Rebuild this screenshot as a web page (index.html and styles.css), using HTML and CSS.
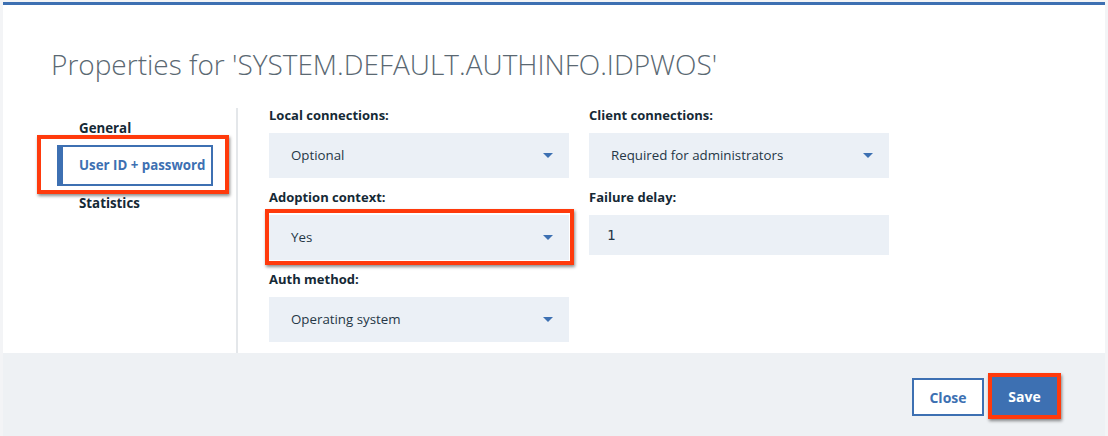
FILE: index.html
```html
<!DOCTYPE html>
<html>
<head>
<meta charset="utf-8">
<link rel="stylesheet" href="styles.css">
</head>
<body>
<div class="modal">
  <div class="header">
    <h1 class="title">Properties for 'SYSTEM.DEFAULT.AUTHINFO.IDPWOS'</h1>
  </div>
  <div class="main">
    <nav class="nav">
      <div class="nav-item">General</div>
      <div class="nav-item selected annotated">User ID + password</div>
      <div class="nav-item">Statistics</div>
    </nav>
    <div class="form">
      <div class="field">
        <div class="label">Local connections:</div>
        <div class="select"><span>Optional</span><span class="caret"></span></div>
      </div>
      <div class="field">
        <div class="label">Client connections:</div>
        <div class="select"><span>Required for administrators</span><span class="caret"></span></div>
      </div>
      <div class="field">
        <div class="label">Adoption context:</div>
        <div class="select annotated-field"><span>Yes</span><span class="caret"></span></div>
      </div>
      <div class="field">
        <div class="label">Failure delay:</div>
        <div class="input">1</div>
      </div>
      <div class="field">
        <div class="label">Auth method:</div>
        <div class="select"><span>Operating system</span><span class="caret"></span></div>
      </div>
    </div>
  </div>
  <div class="footer">
    <button class="btn btn-secondary">Close</button>
    <button class="btn btn-primary annotated-btn">Save</button>
  </div>
</div>
</body>
</html>
```

FILE: styles.css
```css
* { box-sizing: border-box; }
html, body { margin: 0; padding: 0; }
body {
  background: #f3f4f6;
  width: 1108px;
  height: 436px;
  overflow: hidden;
  font-family: "Open Sans", "Noto Sans", sans-serif;
  color: #152935;
}
.modal {
  margin: 2px 3px 0 3px;
  width: 1102px;
  height: 434px;
  background: #ffffff;
  border-top: 3px solid #3d70b2;
  display: flex;
  flex-direction: column;
}
.header {
  height: 101px;
  padding: 41px 0 0 48px;
}
.title {
  margin: 0;
  font-size: 28px;
  line-height: 36px;
  font-weight: 300;
  color: #5a6872;
  white-space: nowrap;
}
.main {
  display: flex;
  height: 247px;
}
.nav {
  width: 235px;
  border-right: 2px solid #e4e7ea;
  margin-top: 2px;
  padding: 3px 0 0 54px;
}
.nav-item {
  width: 156px;
  height: 34px;
  padding-left: 22px;
  font-size: 13.3px;
  font-weight: 700;
  line-height: 34px;
  color: #152935;
  white-space: nowrap;
  position: relative;
}
.nav-item.selected {
  height: 41px;
  line-height: 37px;
  border: 2px solid #3d70b2;
  border-left: 6px solid #3d70b2;
  padding-left: 16px;
  color: #3d70b2;
}
.annotated::after {
  content: "";
  position: absolute;
  left: -26px;
  right: -18px;
  top: -12px;
  bottom: -10px;
  border: 4px solid #ff3a0c;
  box-shadow: 1px 2px 3px rgba(0,0,0,0.45);
}
.form {
  padding: 0 0 0 31px;
  display: grid;
  grid-template-columns: 300px 300px;
  column-gap: 20px;
  align-content: start;
}
.field {
  display: flex;
  flex-direction: column;
  margin-bottom: 10px;
}
.label {
  font-size: 13px;
  font-weight: 700;
  line-height: 18px;
  margin-bottom: 9px;
  color: #152935;
}
.select {
  position: relative;
  height: 45px;
  background: #ebf0f6;
  display: flex;
  align-items: center;
  justify-content: space-between;
  padding: 0 16px 2px 22px;
  font-size: 13.3px;
  color: #253746;
}
.caret {
  width: 0;
  height: 0;
  margin-top: 2px;
  border-left: 5px solid transparent;
  border-right: 5px solid transparent;
  border-top: 5px solid #3d70b2;
}
.input {
  height: 40px;
  background: #ebf0f6;
  display: flex;
  align-items: center;
  padding-left: 18px;
  font-family: "DejaVu Sans Mono", "Liberation Mono", monospace;
  font-size: 14px;
  color: #253746;
}
.annotated-field::after {
  content: "";
  position: absolute;
  left: -4px;
  right: -5px;
  top: -6px;
  bottom: -5px;
  border: 4px solid #ff3a0c;
  box-shadow: 1px 2px 3px rgba(0,0,0,0.45);
}
.footer {
  flex: 1;
  background: #eef1f4;
  display: flex;
  justify-content: flex-end;
  align-items: flex-start;
  gap: 8px;
  padding: 24px 48px 0 0;
}
.btn {
  position: relative;
  height: 38px;
  font-family: "Open Sans", "Noto Sans", sans-serif;
  font-size: 14px;
  font-weight: 700;
  padding: 0;
  cursor: pointer;
}
.btn-secondary {
  width: 72px;
  margin-top: 1px;
  background: #ffffff;
  border: 2px solid #3d70b2;
  color: #3d70b2;
}
.btn-primary {
  width: 65px;
  background: #3d70b2;
  border: none;
  color: #ffffff;
}
.annotated-btn::after {
  content: "";
  position: absolute;
  left: -4px;
  right: -4px;
  top: -4px;
  bottom: -4px;
  border: 4px solid #ff3a0c;
  box-shadow: 1px 2px 3px rgba(0,0,0,0.45);
}
```
